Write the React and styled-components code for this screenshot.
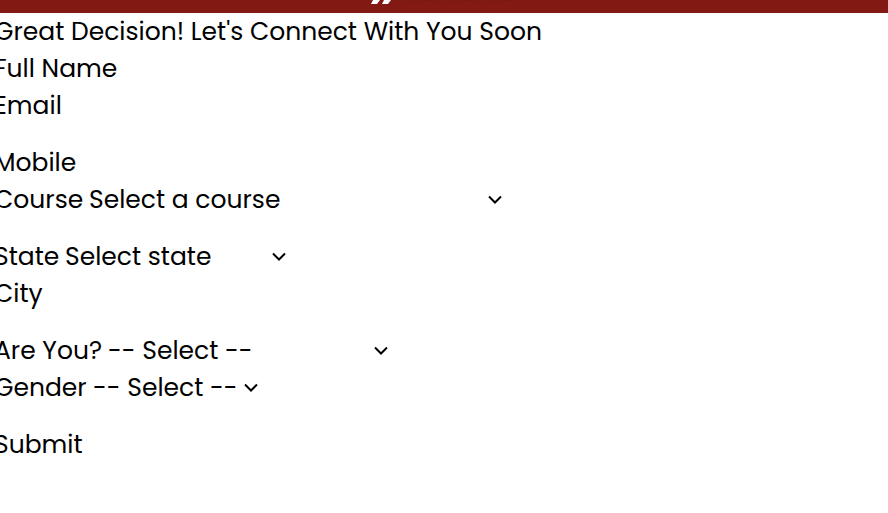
import React from "react";
import styled, { createGlobalStyle } from "styled-components";

const GlobalStyle = createGlobalStyle`
  *, *::before, *::after { box-sizing: border-box; }
  body {
    margin: 0;
    background: #fff;
    color: #000;
    font-family: Poppins, Inter, sans-serif;
    font-size: 25px;
    line-height: 37px;
    overflow-x: hidden;
  }
`;

const Banner = styled.header`
  display: flex;
  justify-content: center;
  height: 13px;
  background: #821912;
`;

const Mark = styled.svg`
  display: block;
  width: 150px;
  height: 5px;
`;

const Form = styled.form`
  display: flex;
  flex-direction: column;
  gap: 20px;
  margin-left: -6px;
`;

const Group = styled.div`
  display: flex;
  flex-direction: column;
  align-items: flex-start;
`;

const Title = styled.h1`
  margin: 0;
  font: inherit;
  white-space: nowrap;
`;

const Row = styled.div`
  display: flex;
  height: 37px;
`;

const Label = styled.label`
  flex: none;
  width: ${(p) => (p.$width ? `${p.$width}px` : "auto")};
  white-space: nowrap;
`;

const TextInput = styled.input`
  width: 240px;
  padding: 0 8px;
  border: 0;
  outline: 0;
  background: transparent;
  color: inherit;
  font: inherit;
`;

const SelectBox = styled.div`
  display: grid;
  grid-template-columns: 1fr auto;
  align-items: center;
  width: ${(p) => p.$width}px;
`;

const Select = styled.select`
  grid-area: 1 / 1 / 2 / 3;
  width: 100%;
  height: 37px;
  padding: 0;
  border: 0;
  outline: 0;
  appearance: none;
  background: transparent;
  color: inherit;
  font: inherit;
`;

const Chevron = styled.svg`
  grid-area: 1 / 2;
  width: 14px;
  height: 10px;
  pointer-events: none;
`;

const Submit = styled.button`
  padding: 0;
  border: 0;
  background: transparent;
  color: inherit;
  font: inherit;
  cursor: pointer;
`;

function TextField({ id, label, type = "text" }) {
  return (
    <Row>
      <Label htmlFor={id}>{label}</Label>
      <TextInput id={id} name={id} type={type} />
    </Row>
  );
}

function SelectField({ id, label, labelWidth, width, placeholder }) {
  return (
    <Row>
      <Label htmlFor={id} $width={labelWidth}>{label}</Label>
      <SelectBox $width={width}>
        <Select id={id} name={id} defaultValue="">
          <option value="">{placeholder}</option>
        </Select>
        <Chevron viewBox="0 0 14 10" fill="none" aria-hidden="true">
          <path d="M1 1.5L7 7.5L13 1.5" stroke="#000" strokeWidth="2" />
        </Chevron>
      </SelectBox>
    </Row>
  );
}

export default function App() {
  return (
    <>
      <GlobalStyle />
      <Banner>
        <Mark viewBox="0 0 150 5" aria-hidden="true">
          <path d="M4 0H11L8 4H2ZM15 0H22L19 4H13Z" fill="#fff" />
          <path d="M27 0H147" stroke="#6b1a14" strokeWidth="1" strokeDasharray="5 4 8 3" />
        </Mark>
      </Banner>
      <Form onSubmit={(e) => e.preventDefault()}>
        <Group>
          <Title>Great Decision! Let's Connect With You Soon</Title>
          <TextField id="name" label="Full Name" />
          <TextField id="email" label="Email" type="email" />
        </Group>
        <Group>
          <TextField id="mobile" label="Mobile" type="tel" />
          <SelectField id="course" label="Course" labelWidth={95} width={413} placeholder="Select a course" />
        </Group>
        <Group>
          <SelectField id="state" label="State" labelWidth={71} width={221} placeholder="Select state" />
          <TextField id="city" label="City" />
        </Group>
        <Group>
          <SelectField id="role" label="Are You?" labelWidth={114} width={280} placeholder="-- Select --" />
          <SelectField id="gender" label="Gender" labelWidth={99} width={165} placeholder="-- Select --" />
        </Group>
        <Group>
          <Submit type="submit">Submit</Submit>
        </Group>
      </Form>
    </>
  );
}
